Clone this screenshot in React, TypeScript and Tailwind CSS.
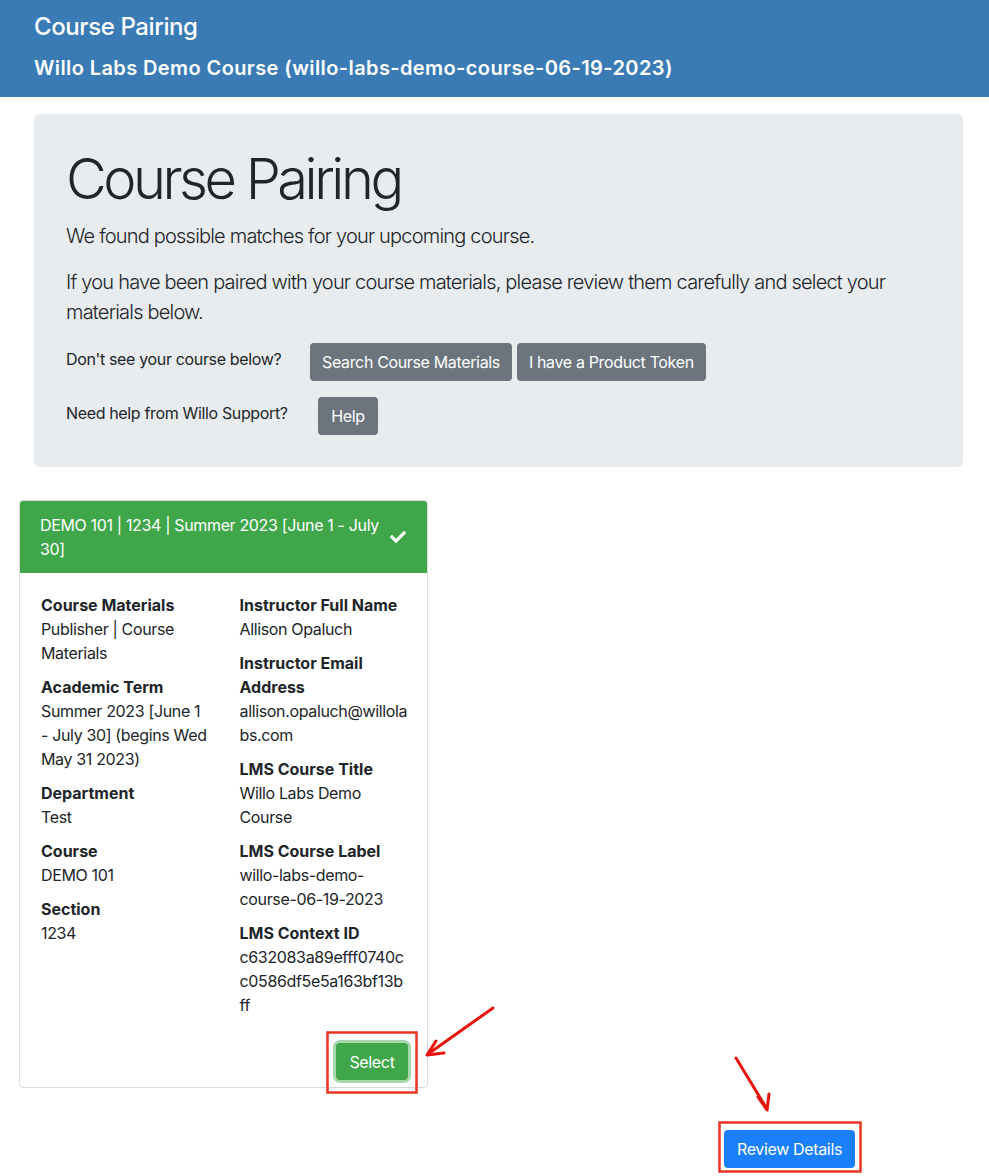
import { FaCheck } from 'react-icons/fa'

const LEFT_FIELDS = [
  { label: 'Course Materials', value: 'Publisher | Course Materials' },
  { label: 'Academic Term', value: 'Summer 2023 [June 1 - July 30] (begins Wed May 31 2023)' },
  { label: 'Department', value: 'Test' },
  { label: 'Course', value: 'DEMO 101' },
  { label: 'Section', value: '1234' },
]

const RIGHT_FIELDS = [
  { label: 'Instructor Full Name', value: 'Allison Opaluch' },
  { label: 'Instructor Email Address', value: 'allison.opaluch@willolabs.com', breakAll: true },
  { label: 'LMS Course Title', value: 'Willo Labs Demo Course' },
  { label: 'LMS Course Label', value: 'willo-labs-demo-course-06-19-2023' },
  { label: 'LMS Context ID', value: 'c632083a89efff0740cc0586df5e5a163bf13bff', breakAll: true },
]

type Field = { label: string; value: string; breakAll?: boolean }

function FieldList({ fields }: { fields: Field[] }) {
  return (
    <div className="flex flex-col">
      {fields.map((f) => (
        <div key={f.label} className="mb-[10px]">
          <div className="font-bold tracking-normal">{f.label}</div>
          <div className={f.breakAll ? 'break-all' : ''}>{f.value}</div>
        </div>
      ))}
    </div>
  )
}

function Annotations() {
  return (
    <svg
      className="absolute left-0 top-0 pointer-events-none"
      width={989}
      height={1176}
      viewBox="0 0 989 1176"
    >
      <g fill="none" stroke="#ea3323" strokeWidth={2.5}>
        <rect x={327.5} y={1032.5} width={89} height={60} />
        <rect x={719.5} y={1122.5} width={141} height={49} />
      </g>
      <g fill="none" stroke="#e8140c" strokeWidth={3} strokeLinecap="round" strokeLinejoin="round">
        <line x1={493} y1={1008} x2={428} y2={1054} />
        <polyline points="436,1041 427,1055 444,1053" />
        <line x1={736} y1={1058} x2={767} y2={1109} />
        <polyline points="758,1097 767,1110 769,1094" />
      </g>
    </svg>
  )
}

export default function App() {
  return (
    <div className="relative w-[989px] min-h-[1176px] bg-white text-[#212529] font-['Inter','Liberation_Sans',sans-serif] text-[16px] leading-[24px] tracking-[-0.35px]">
      <header className="h-[97px] bg-[#3a7bb5] px-[34px] pt-[12px] text-white">
        <h1 className="text-[24px] leading-[29px] font-medium tracking-[-0.4px]">Course Pairing</h1>
        <h2 className="mt-[15px] text-[20px] leading-[24px] font-semibold tracking-[0.4px]">
          Willo Labs Demo Course (willo-labs-demo-course-06-19-2023)
        </h2>
      </header>

      <section className="ml-[34px] mt-[17px] w-[929px] rounded-[5px] bg-[#e9ecef] px-[32px] py-[32px]">
        <h1 className="text-[56px] leading-[67px] font-light tracking-[-3.5px]">Course Pairing</h1>
        <p className="mt-[8px] text-[20px] leading-[30px] font-light tracking-[-0.8px]">
          We found possible matches for your upcoming course.
        </p>
        <p className="mt-[16px] text-[20px] leading-[30px] font-light tracking-[-0.8px]">
          If you have been paired with your course materials, please review them carefully and select your
          materials below.
        </p>
        <div className="mt-[16px] flex items-start">
          <span className="mt-[4px] w-[244px]">Don't see your course below?</span>
          <button className="h-[38px] rounded-[4px] bg-[#6c757d] px-[12px] text-white">Search Course Materials</button>
          <button className="ml-[5px] h-[38px] rounded-[4px] bg-[#6c757d] px-[12px] text-white">
            I have a Product Token
          </button>
        </div>
        <div className="mt-[16px] flex items-start">
          <span className="mt-[4px] w-[252px]">Need help from Willo Support?</span>
          <button className="h-[38px] w-[60px] rounded-[4px] bg-[#6c757d] text-white">Help</button>
        </div>
      </section>

      <div className="ml-[19px] mt-[33px] w-[409px] rounded-[4px] border border-[#dcdcdc]">
        <div className="flex items-center justify-between rounded-t-[3px] bg-[#40a64a] px-[20px] py-[12px] text-white">
          <span className="w-[345px]">DEMO 101 | 1234 | Summer 2023 [June 1 - July 30]</span>
          <FaCheck className="mr-[1px] h-[16px] w-[16px]" />
        </div>
        <div className="pl-[21px] pr-[19px] pt-[20px] pb-[7px]">
          <div className="grid grid-cols-2 gap-x-[30px]">
            <FieldList fields={LEFT_FIELDS} />
            <FieldList fields={RIGHT_FIELDS} />
          </div>
          <div className="mt-[16px] flex justify-end">
            <button className="h-[37px] w-[72px] rounded-[4px] bg-[#40a64a] text-white shadow-[0_0_0_3px_rgba(64,166,74,0.45)]">
              Select
            </button>
          </div>
        </div>
      </div>

      <div className="ml-[724px] mt-[42px] pb-[8px]">
        <button className="h-[38px] w-[131px] rounded-[4px] bg-[#1a7ffb] text-white">Review Details</button>
      </div>

      <Annotations />
    </div>
  )
}
